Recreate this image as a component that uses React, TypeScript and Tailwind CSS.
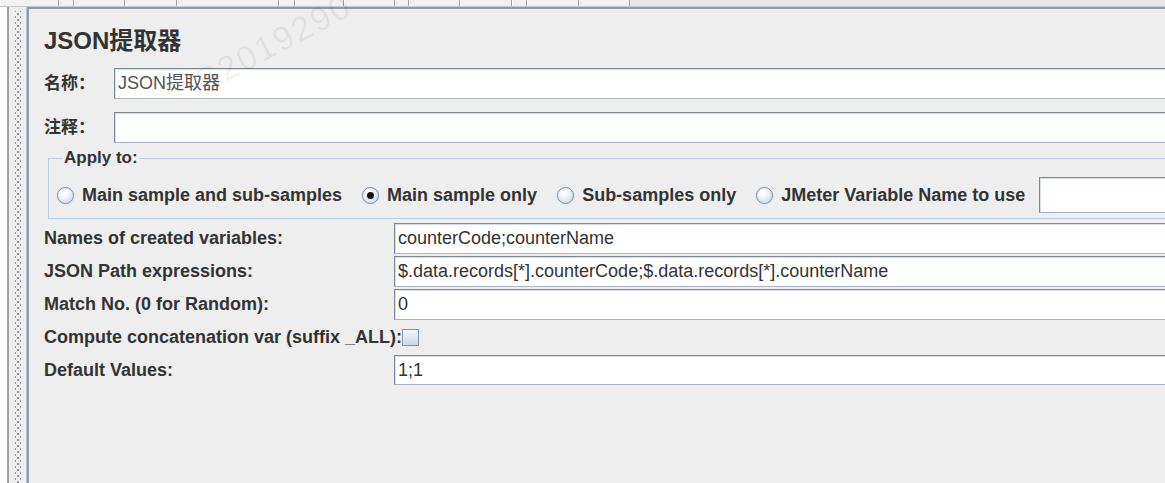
const FONT = "font-['Liberation_Sans','Noto_Sans_CJK_SC',sans-serif]";

const TABS = [59, 15, 51, 52, 102, 16, 49, 51, 14, 51, 52, 15, 52, 51];

function TextBox({ value, className = "" }: { value?: string; className?: string }) {
  return (
    <div
      className={`flex items-center bg-white border border-t-[#7a8a99] border-l-[#7a8a99] border-b-[#a9b5c1] border-r-[#a9b5c1] shadow-[inset_1px_1px_0_#d6dde4] pl-[3px] text-[18px] text-[#333] whitespace-nowrap overflow-hidden ${className}`}
    >
      {value}
    </div>
  );
}

function Radio({ label, checked = false }: { label: string; checked?: boolean }) {
  return (
    <div className="flex items-center gap-[8px]">
      <span className="flex h-[17px] w-[17px] items-center justify-center rounded-full border border-[#7f90a3] bg-[radial-gradient(circle_at_40%_35%,#ffffff_15%,#c2d4e8_95%)] shadow-[0_0_0_1px_#dfe6ee]">
        {checked ? <span className="h-[7px] w-[7px] rounded-full bg-[#111]" /> : null}
      </span>
      <span className="font-bold text-[18px] text-[#333] whitespace-nowrap">{label}</span>
    </div>
  );
}

function Label({ children }: { children: React.ReactNode }) {
  return <div className="font-bold text-[18px] text-[#333] whitespace-nowrap">{children}</div>;
}

export default function App() {
  return (
    <div className={`relative w-[1165px] h-[483px] overflow-hidden bg-[#eeeeee] ${FONT}`}>
      {/* tab strip remnant */}
      <div className="flex h-[7px] bg-[#e6e6e6] border-b border-[#c4c9cf]">
        {TABS.map((w, i) => (
          <div
            key={i}
            style={{ width: w }}
            className="h-full border-r border-[#9aa3ad] bg-[#f1f1f1] border-l border-l-white"
          />
        ))}
      </div>

      <div className="flex h-[476px]">
        {/* tree panel edge */}
        <div className="w-[9px] bg-white border-r-2 border-[#93a1b0]" />
        {/* splitter */}
        <div className="w-[18px] flex justify-center bg-[#eeeeee] border-r border-[#b9c2cc]">
          <div className="w-[6px] mt-[4px] bg-[radial-gradient(circle,#8d99a8_0.9px,transparent_1.3px),radial-gradient(circle,#8d99a8_0.9px,transparent_1.3px)] bg-size-[6px_6px] bg-position-[0_0,3px_3px]" />
        </div>

        {/* content */}
        <div className="flex-1 min-w-0 border-l-2 border-t-2 border-l-[#8d9aa8] border-t-[#8d9aa8] pl-[15px]">
          <div className="w-[1170px]">
            <h1 className="mt-[19px] h-[26px] leading-[26px] text-[24px] font-bold text-[#333]">
              JSON提取器
            </h1>

            <div className="mt-[14px] flex items-center">
              <div className="w-[70px] font-bold text-[17px] text-[#333]">名称：</div>
              <TextBox value="JSON提取器" className="flex-1 h-[31px] text-[#555]" />
            </div>

            <div className="mt-[13px] flex items-center">
              <div className="w-[70px] font-bold text-[17px] text-[#333]">注释：</div>
              <TextBox className="flex-1 h-[31px]" />
            </div>

            <fieldset className="mt-[5px] ml-[4px] border border-[#b7cde3] pl-[8px] pr-0 pt-[9px] pb-[5px]">
              <legend className="ml-[6px] px-px font-bold text-[17px] leading-[20px] text-[#333]">
                Apply to:
              </legend>
              <div className="flex items-center gap-[20px] h-[36px]">
                <Radio label="Main sample and sub-samples" />
                <Radio label="Main sample only" checked />
                <Radio label="Sub-samples only" />
                <Radio label="JMeter Variable Name to use" />
                <TextBox className="ml-[-6px] w-[200px] h-[36px]" />
              </div>
            </fieldset>

            <div className="mt-[4px] grid grid-cols-[350px_1fr] gap-y-[2px] items-center">
              <Label>Names of created variables:</Label>
              <TextBox value="counterCode;counterName" className="h-[31px]" />

              <Label>JSON Path expressions:</Label>
              <TextBox
                value="$.data.records[*].counterCode;$.data.records[*].counterName"
                className="h-[31px]"
              />

              <Label>Match No. (0 for Random):</Label>
              <TextBox value="0" className="h-[31px]" />

              <Label>Compute concatenation var (suffix _ALL):</Label>
              <div className="h-[31px] flex items-center">
                <span className="ml-[8px] h-[17px] w-[17px] border border-[#8394a6] bg-[linear-gradient(#f6f8fb,#c8d6e5)]" />
              </div>

              <Label>Default Values:</Label>
              <TextBox value="1;1" className="h-[30px]" />
            </div>
          </div>
        </div>
      </div>

      {/* watermark */}
      <div className="pointer-events-none absolute left-[188px] top-[18px] -rotate-[28deg] text-[34px] text-black/[0.06] tracking-[2px]">
        S2019290
      </div>
    </div>
  );
}
